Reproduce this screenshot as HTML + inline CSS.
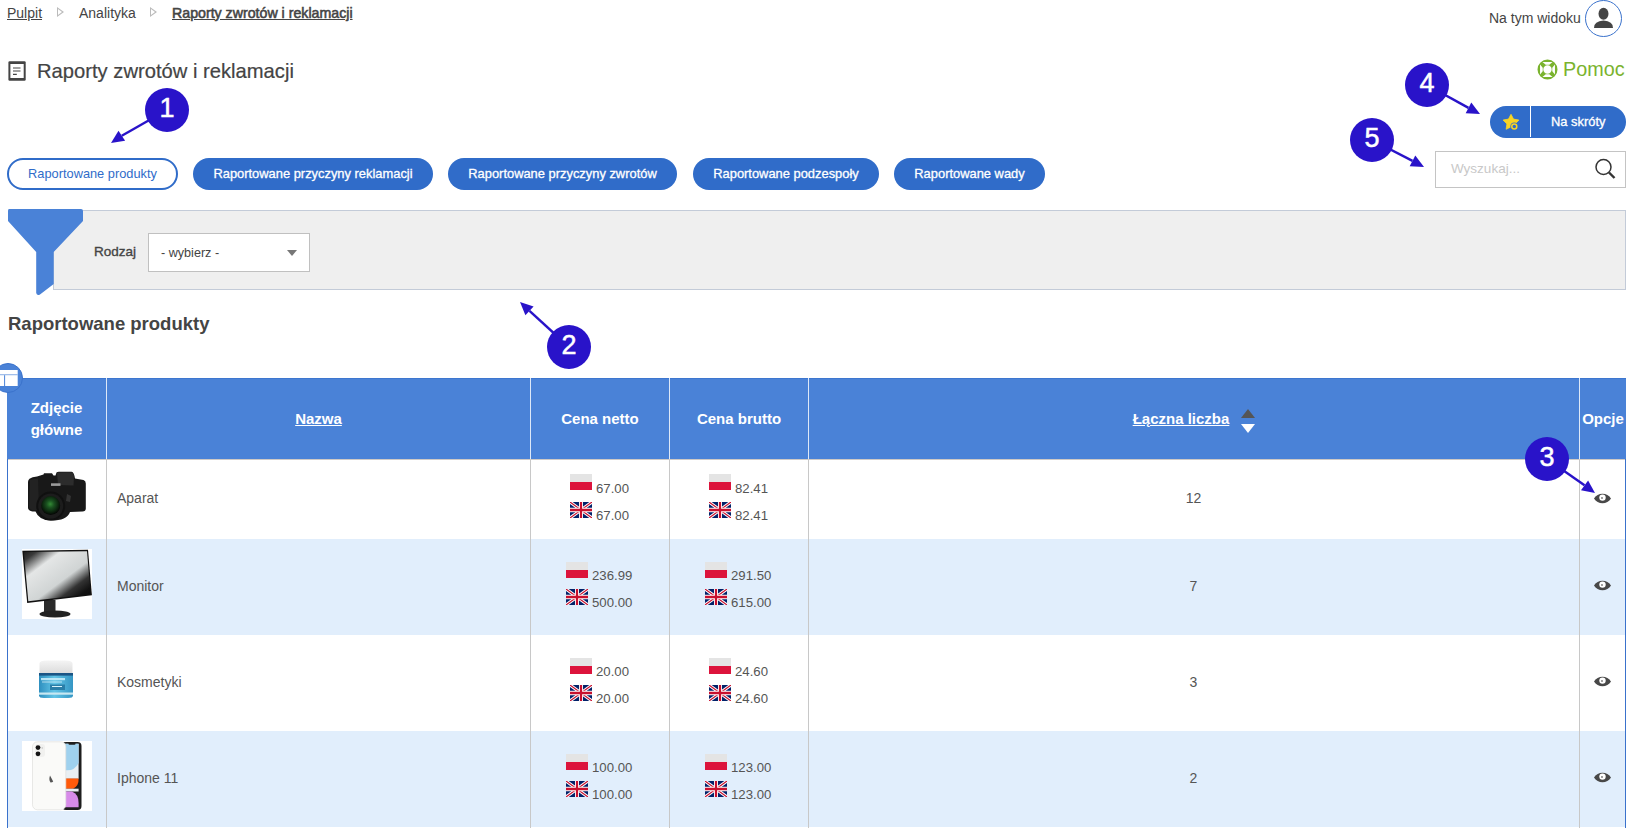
<!DOCTYPE html>
<html><head><meta charset="utf-8">
<style>
*{margin:0;padding:0;box-sizing:border-box}
html,body{width:1629px;height:828px;overflow:hidden;background:#fff}
body{font-family:"Liberation Sans",sans-serif;color:#444;position:relative}
.a{position:absolute;white-space:nowrap}
.bc{font-size:14px;line-height:16px;top:5px;color:#444}
.bc u{text-decoration:underline;text-underline-offset:1px}
.tri{position:absolute;width:0;height:0;border-top:5px solid transparent;border-bottom:5px solid transparent;border-left:7px solid #bbb}
.tri:after{content:"";position:absolute;left:-6px;top:-3px;border-top:3px solid transparent;border-bottom:3px solid transparent;border-left:4px solid #fff}
.tab{position:absolute;top:158px;height:32px;border-radius:16px;background:#306cc9;color:#fff;font-size:12.9px;line-height:32px;text-align:center;-webkit-text-stroke:0.3px #fff}
.tab.out{background:#fff;border:2px solid #306cc9;color:#306cc9;font-weight:normal;line-height:28px;font-size:12.8px;-webkit-text-stroke:0}
.ann{position:absolute;width:44px;height:44px;border-radius:50%;background:#2913c9;color:#fff;font-size:26px;line-height:44px;text-align:center}
.th{position:absolute;top:378px;height:81px;color:#fff;font-weight:bold;font-size:15px;display:flex;align-items:center;justify-content:center;text-align:center;line-height:22px}
.vl{position:absolute;width:1px}
.row{position:absolute;left:7px;width:1619px}
.cell{position:absolute;font-size:14px;color:#555}
.price{position:absolute;font-size:13.2px;color:#555;line-height:16px}
.pl{display:inline-block;width:22px;height:16px;background:linear-gradient(#e4e4e4 50%,#dc143c 50%);vertical-align:-3px;margin-right:4px}
</style></head><body>

<!-- breadcrumb -->
<div class="a bc" style="left:7px"><u>Pulpit</u></div>
<div class="tri" style="left:57px;top:7px"></div>
<div class="a bc" style="left:79px">Analityka</div>
<div class="tri" style="left:150px;top:7px"></div>
<div class="a bc" style="left:172px;font-size:14.2px;-webkit-text-stroke:0.55px #444"><u>Raporty zwrotów i reklamacji</u></div>

<div class="a" style="left:1489px;top:10px;font-size:14px;line-height:16px">Na tym widoku</div>
<div class="a" style="left:1585px;top:0px;width:37px;height:37px;border:1.5px solid #3a72cc;border-radius:50%"></div>

<!-- title -->
<div class="a" style="left:37px;top:60px;font-size:20.2px;line-height:22px;color:#444;-webkit-text-stroke:0.2px #444">Raporty zwrotów i reklamacji</div>
<div class="a" style="left:1563px;top:58px;font-size:19.8px;line-height:22px;color:#7ab32e">Pomoc</div>

<!-- tabs -->
<div class="tab out" style="left:7px;width:171px">Raportowane produkty</div>
<div class="tab" style="left:193px;width:240px">Raportowane przyczyny reklamacji</div>
<div class="tab" style="left:448px;width:229px">Raportowane przyczyny zwrotów</div>
<div class="tab" style="left:693px;width:186px">Raportowane podzespoły</div>
<div class="tab" style="left:894px;width:151px">Raportowane wady</div>

<!-- na skroty -->
<div class="a" style="left:1490px;top:106px;width:136px;height:32px;border-radius:16px;background:#306cc9"></div>
<div class="a" style="left:1530px;top:106px;width:1px;height:31px;background:#fff"></div>
<div class="a" style="left:1551px;top:115px;font-size:12.9px;color:#fff;line-height:14px;-webkit-text-stroke:0.3px #fff">Na skróty</div>

<!-- search -->
<div class="a" style="left:1435px;top:151px;width:191px;height:37px;border:1.5px solid #c4c4c4;background:#fff"></div>
<div class="a" style="left:1451px;top:162px;font-size:13.5px;color:#c8c8c8;line-height:14px">Wyszukaj...</div>

<!-- filter panel -->
<div class="a" style="left:53px;top:210px;width:1573px;height:80px;background:#efefef;border:1px solid #c3cbd8"></div>
<div class="a" style="left:94px;top:245px;font-size:13.5px;color:#444;line-height:14px;-webkit-text-stroke:0.35px #444">Rodzaj</div>
<div class="a" style="left:148px;top:233px;width:162px;height:39px;background:#fff;border:1.5px solid #c0c0c0"></div>
<div class="a" style="left:161px;top:246px;font-size:12.6px;color:#444;line-height:14px">- wybierz -</div>

<!-- heading -->
<div class="a" style="left:8px;top:314px;font-size:18.5px;font-weight:bold;color:#444;line-height:20px">Raportowane produkty</div>

<!-- table header -->
<div class="a" style="left:7px;top:378px;width:1619px;height:81px;background:#4a82d7;border-top:1px solid #3d76cf"></div>


<!-- table header cells -->
<div class="th" style="left:7px;width:99px">Zdjęcie<br>główne</div>
<div class="th" style="left:107px;width:423px"><u>Nazwa</u></div>
<div class="th" style="left:531px;width:138px">Cena netto</div>
<div class="th" style="left:670px;width:138px">Cena brutto</div>
<div class="th" style="left:809px;width:770px"><u>Łączna liczba</u><span style="display:inline-block;width:26px"></span></div>
<div class="th" style="left:1580px;width:46px">Opcje</div>
<div class="a" style="left:106px;top:378px;width:1px;height:81px;background:#dde8f8"></div>
<div class="a" style="left:530px;top:378px;width:1px;height:81px;background:#dde8f8"></div>
<div class="a" style="left:669px;top:378px;width:1px;height:81px;background:#dde8f8"></div>
<div class="a" style="left:808px;top:378px;width:1px;height:81px;background:#dde8f8"></div>
<div class="a" style="left:1579px;top:378px;width:1px;height:81px;background:#dde8f8"></div>
<!-- rows -->
<div class="a" style="left:7px;top:459px;width:1619px;height:1px;background:#cfcac6"></div>
<div class="a" style="left:7px;top:539px;width:1619px;height:96px;background:#e1eefc"></div>
<div class="a" style="left:7px;top:731px;width:1619px;height:96px;background:#e1eefc"></div>
<div class="a" style="left:7px;top:459px;width:1px;height:369px;background:#3a72cc"></div>
<div class="a" style="left:1625px;top:459px;width:1px;height:369px;background:#3a72cc"></div>
<div class="a" style="left:106px;top:460px;width:1px;height:368px;background:#c8c8c8"></div>
<div class="a" style="left:530px;top:460px;width:1px;height:368px;background:#c8c8c8"></div>
<div class="a" style="left:669px;top:460px;width:1px;height:368px;background:#c8c8c8"></div>
<div class="a" style="left:808px;top:460px;width:1px;height:368px;background:#c8c8c8"></div>
<div class="a" style="left:1579px;top:460px;width:1px;height:368px;background:#c8c8c8"></div>
<div class="a cell" style="left:117px;top:488px;line-height:20px">Aparat</div>
<div class="a cell" style="left:1180px;width:27px;text-align:center;top:488px;line-height:20px">12</div>
<div class="a cell" style="left:117px;top:576px;line-height:20px">Monitor</div>
<div class="a cell" style="left:1180px;width:27px;text-align:center;top:576px;line-height:20px">7</div>
<div class="a cell" style="left:117px;top:672px;line-height:20px">Kosmetyki</div>
<div class="a cell" style="left:1180px;width:27px;text-align:center;top:672px;line-height:20px">3</div>
<div class="a cell" style="left:117px;top:768px;line-height:20px">Iphone 11</div>
<div class="a cell" style="left:1180px;width:27px;text-align:center;top:768px;line-height:20px">2</div>
<div class="a pl" style="left:570px;top:474px"></div><div class="a price" style="left:596px;top:481px">67.00</div>
<div class="a" style="left:570px;top:502px;width:22px;height:16px;line-height:0"><svg width="22" height="16" viewBox="0 0 60 40" preserveAspectRatio="none"><rect width="60" height="40" fill="#012169"/><path d="M0,0 L60,40 M60,0 L0,40" stroke="#fff" stroke-width="8"/><path d="M0,0 L60,40 M60,0 L0,40" stroke="#C8102E" stroke-width="3"/><path d="M30,0 V40 M0,20 H60" stroke="#fff" stroke-width="11"/><path d="M30,0 V40 M0,20 H60" stroke="#C8102E" stroke-width="6"/></svg></div><div class="a price" style="left:596px;top:508px">67.00</div>
<div class="a pl" style="left:709px;top:474px"></div><div class="a price" style="left:735px;top:481px">82.41</div>
<div class="a" style="left:709px;top:502px;width:22px;height:16px;line-height:0"><svg width="22" height="16" viewBox="0 0 60 40" preserveAspectRatio="none"><rect width="60" height="40" fill="#012169"/><path d="M0,0 L60,40 M60,0 L0,40" stroke="#fff" stroke-width="8"/><path d="M0,0 L60,40 M60,0 L0,40" stroke="#C8102E" stroke-width="3"/><path d="M30,0 V40 M0,20 H60" stroke="#fff" stroke-width="11"/><path d="M30,0 V40 M0,20 H60" stroke="#C8102E" stroke-width="6"/></svg></div><div class="a price" style="left:735px;top:508px">82.41</div>
<svg class="a" style="left:1594px;top:493px" width="17" height="11" viewBox="0 0 17 11"><path d="M0,5.5 C3.5,-0.8 13.5,-0.8 17,5.5 C13.5,11.8 3.5,11.8 0,5.5Z" fill="#484848"/><circle cx="8.5" cy="4.6" r="3.2" fill="#fff"/><circle cx="8" cy="5" r="0.9" fill="#777"/></svg>
<div class="a pl" style="left:566px;top:562px"></div><div class="a price" style="left:592px;top:568px">236.99</div>
<div class="a" style="left:566px;top:589px;width:22px;height:16px;line-height:0"><svg width="22" height="16" viewBox="0 0 60 40" preserveAspectRatio="none"><rect width="60" height="40" fill="#012169"/><path d="M0,0 L60,40 M60,0 L0,40" stroke="#fff" stroke-width="8"/><path d="M0,0 L60,40 M60,0 L0,40" stroke="#C8102E" stroke-width="3"/><path d="M30,0 V40 M0,20 H60" stroke="#fff" stroke-width="11"/><path d="M30,0 V40 M0,20 H60" stroke="#C8102E" stroke-width="6"/></svg></div><div class="a price" style="left:592px;top:595px">500.00</div>
<div class="a pl" style="left:705px;top:562px"></div><div class="a price" style="left:731px;top:568px">291.50</div>
<div class="a" style="left:705px;top:589px;width:22px;height:16px;line-height:0"><svg width="22" height="16" viewBox="0 0 60 40" preserveAspectRatio="none"><rect width="60" height="40" fill="#012169"/><path d="M0,0 L60,40 M60,0 L0,40" stroke="#fff" stroke-width="8"/><path d="M0,0 L60,40 M60,0 L0,40" stroke="#C8102E" stroke-width="3"/><path d="M30,0 V40 M0,20 H60" stroke="#fff" stroke-width="11"/><path d="M30,0 V40 M0,20 H60" stroke="#C8102E" stroke-width="6"/></svg></div><div class="a price" style="left:731px;top:595px">615.00</div>
<svg class="a" style="left:1594px;top:580px" width="17" height="11" viewBox="0 0 17 11"><path d="M0,5.5 C3.5,-0.8 13.5,-0.8 17,5.5 C13.5,11.8 3.5,11.8 0,5.5Z" fill="#484848"/><circle cx="8.5" cy="4.6" r="3.2" fill="#fff"/><circle cx="8" cy="5" r="0.9" fill="#777"/></svg>
<div class="a pl" style="left:570px;top:658px"></div><div class="a price" style="left:596px;top:664px">20.00</div>
<div class="a" style="left:570px;top:685px;width:22px;height:16px;line-height:0"><svg width="22" height="16" viewBox="0 0 60 40" preserveAspectRatio="none"><rect width="60" height="40" fill="#012169"/><path d="M0,0 L60,40 M60,0 L0,40" stroke="#fff" stroke-width="8"/><path d="M0,0 L60,40 M60,0 L0,40" stroke="#C8102E" stroke-width="3"/><path d="M30,0 V40 M0,20 H60" stroke="#fff" stroke-width="11"/><path d="M30,0 V40 M0,20 H60" stroke="#C8102E" stroke-width="6"/></svg></div><div class="a price" style="left:596px;top:691px">20.00</div>
<div class="a pl" style="left:709px;top:658px"></div><div class="a price" style="left:735px;top:664px">24.60</div>
<div class="a" style="left:709px;top:685px;width:22px;height:16px;line-height:0"><svg width="22" height="16" viewBox="0 0 60 40" preserveAspectRatio="none"><rect width="60" height="40" fill="#012169"/><path d="M0,0 L60,40 M60,0 L0,40" stroke="#fff" stroke-width="8"/><path d="M0,0 L60,40 M60,0 L0,40" stroke="#C8102E" stroke-width="3"/><path d="M30,0 V40 M0,20 H60" stroke="#fff" stroke-width="11"/><path d="M30,0 V40 M0,20 H60" stroke="#C8102E" stroke-width="6"/></svg></div><div class="a price" style="left:735px;top:691px">24.60</div>
<svg class="a" style="left:1594px;top:676px" width="17" height="11" viewBox="0 0 17 11"><path d="M0,5.5 C3.5,-0.8 13.5,-0.8 17,5.5 C13.5,11.8 3.5,11.8 0,5.5Z" fill="#484848"/><circle cx="8.5" cy="4.6" r="3.2" fill="#fff"/><circle cx="8" cy="5" r="0.9" fill="#777"/></svg>
<div class="a pl" style="left:566px;top:754px"></div><div class="a price" style="left:592px;top:760px">100.00</div>
<div class="a" style="left:566px;top:781px;width:22px;height:16px;line-height:0"><svg width="22" height="16" viewBox="0 0 60 40" preserveAspectRatio="none"><rect width="60" height="40" fill="#012169"/><path d="M0,0 L60,40 M60,0 L0,40" stroke="#fff" stroke-width="8"/><path d="M0,0 L60,40 M60,0 L0,40" stroke="#C8102E" stroke-width="3"/><path d="M30,0 V40 M0,20 H60" stroke="#fff" stroke-width="11"/><path d="M30,0 V40 M0,20 H60" stroke="#C8102E" stroke-width="6"/></svg></div><div class="a price" style="left:592px;top:787px">100.00</div>
<div class="a pl" style="left:705px;top:754px"></div><div class="a price" style="left:731px;top:760px">123.00</div>
<div class="a" style="left:705px;top:781px;width:22px;height:16px;line-height:0"><svg width="22" height="16" viewBox="0 0 60 40" preserveAspectRatio="none"><rect width="60" height="40" fill="#012169"/><path d="M0,0 L60,40 M60,0 L0,40" stroke="#fff" stroke-width="8"/><path d="M0,0 L60,40 M60,0 L0,40" stroke="#C8102E" stroke-width="3"/><path d="M30,0 V40 M0,20 H60" stroke="#fff" stroke-width="11"/><path d="M30,0 V40 M0,20 H60" stroke="#C8102E" stroke-width="6"/></svg></div><div class="a price" style="left:731px;top:787px">123.00</div>
<svg class="a" style="left:1594px;top:772px" width="17" height="11" viewBox="0 0 17 11"><path d="M0,5.5 C3.5,-0.8 13.5,-0.8 17,5.5 C13.5,11.8 3.5,11.8 0,5.5Z" fill="#484848"/><circle cx="8.5" cy="4.6" r="3.2" fill="#fff"/><circle cx="8" cy="5" r="0.9" fill="#777"/></svg>

<!-- title icon -->
<svg class="a" style="left:8px;top:61px" width="18" height="20" viewBox="0 0 18 20"><rect x="0.4" y="0.2" width="17.3" height="19.6" rx="1.2" fill="#444"/><rect x="2.4" y="3" width="13.3" height="14" fill="#fff"/><path d="M5,7H12.5M5,10H12.5M5,13.3H8.8" stroke="#444" stroke-width="1.2"/></svg>
<!-- avatar person -->
<svg class="a" style="left:1593px;top:7px" width="21" height="22" viewBox="0 0 21 22"><ellipse cx="10.5" cy="6.8" rx="5" ry="6" fill="#444"/><path d="M1,21 Q1,14 10.5,13.5 Q20,14 20,21Z" fill="#444"/></svg>
<!-- lifebuoy -->
<svg class="a" style="left:1537px;top:59px" width="21" height="21" viewBox="0 0 21 21"><circle cx="10.5" cy="10.5" r="7.1" fill="none" stroke="#7ab32e" stroke-width="5.8"/><path d="M17.96,5.47 L17.96,15.53 L15.28,12.28 L15.28,8.72Z M15.53,17.96 L5.47,17.96 L8.72,15.28 L12.28,15.28Z M3.04,15.53 L3.04,5.47 L5.72,8.72 L5.72,12.28Z M5.47,3.04 L15.53,3.04 L12.28,5.72 L8.72,5.72Z" fill="#fff"/></svg>
<!-- star -->
<svg class="a" style="left:1502px;top:114px" width="18" height="17" viewBox="0 0 18 17"><path d="M9.00,0.30 L11.53,5.12 L16.89,6.04 L13.09,9.93 L13.88,15.31 L9.00,12.90 L4.12,15.31 L4.91,9.93 L1.11,6.04 L6.47,5.12Z" fill="#f9d423" stroke="#f9d423" stroke-width="0.8" stroke-linejoin="round"/><circle cx="12.3" cy="12.4" r="3.9" fill="#306cc9"/><circle cx="12.3" cy="12.4" r="2.5" fill="none" stroke="#f9d423" stroke-width="1.5"/></svg>
<!-- search icon -->
<svg class="a" style="left:1594px;top:158px" width="22" height="22" viewBox="0 0 22 22"><circle cx="9.5" cy="9" r="7.5" fill="none" stroke="#333" stroke-width="1.5"/><path d="M15,14.5L20.5,20" stroke="#333" stroke-width="2.4"/></svg>
<!-- select arrow -->
<div class="a" style="left:287px;top:250px;width:0;height:0;border-left:5px solid transparent;border-right:5px solid transparent;border-top:6px solid #777"></div>
<!-- funnel -->
<svg class="a" style="left:7px;top:208px" width="77" height="88" viewBox="0 0 77 88"><path d="M2,1 H74 Q76,1 76,3 V13 L46.7,44 V76 L33,86.5 Q30,88 29.2,85 V44 L1,13 V3 Q1,1 2,1Z" fill="#4a82d7"/></svg>
<!-- sort icons -->
<div class="a" style="left:1241px;top:409px;width:0;height:0;border-left:7px solid transparent;border-right:7px solid transparent;border-bottom:9px solid #555"></div>
<div class="a" style="left:1241px;top:424px;width:0;height:0;border-left:7px solid transparent;border-right:7px solid transparent;border-top:9px solid #fff"></div>
<!-- table settings circle -->
<div class="a" style="left:-7px;top:363px;width:30px;height:30px;border-radius:50%;background:#4a82d7;border:1px solid #3a72cc"></div>
<svg class="a" style="left:0px;top:370px" width="18" height="17" viewBox="0 0 18 17"><rect x="0" y="0" width="17.7" height="16" fill="#fff"/><rect x="0" y="4.3" width="17.7" height="0.9" fill="#7aa3e2"/><rect x="4.1" y="5.2" width="1" height="10.8" fill="#4a82d7"/></svg>
<svg class="a" style="left:0;top:0" width="1629" height="828" viewBox="0 0 1629 828"><line x1="167" y1="110" x2="121.8" y2="135.8" stroke="#2913c9" stroke-width="2.4"/><path d="M111,143 L118.5,130.8 L125.1,140.8Z" fill="#2913c9"/><circle cx="167" cy="110" r="22" fill="#2913c9"/><line x1="569" y1="347" x2="529.5" y2="310.9" stroke="#2913c9" stroke-width="2.4"/><path d="M520,302 L533.6,306.5 L525.4,315.3Z" fill="#2913c9"/><circle cx="569" cy="347" r="22" fill="#2913c9"/><line x1="1547" y1="459" x2="1584.5" y2="485.3" stroke="#2913c9" stroke-width="2.4"/><path d="M1595,493 L1581.0,490.2 L1588.1,480.5Z" fill="#2913c9"/><circle cx="1547" cy="459" r="22" fill="#2913c9"/><line x1="1427" y1="85" x2="1468.5" y2="107.9" stroke="#2913c9" stroke-width="2.4"/><path d="M1480,114 L1465.7,113.2 L1471.3,102.6Z" fill="#2913c9"/><circle cx="1427" cy="85" r="22" fill="#2913c9"/><line x1="1372" y1="140" x2="1412.5" y2="160.9" stroke="#2913c9" stroke-width="2.4"/><path d="M1424,167 L1409.7,166.2 L1415.3,155.6Z" fill="#2913c9"/><circle cx="1372" cy="140" r="22" fill="#2913c9"/></svg>
<div class="a" style="left:145px;top:86px;width:44px;height:44px;text-align:center;line-height:44px;font-size:27px;color:#fff;-webkit-text-stroke:0.5px #fff">1</div>
<div class="a" style="left:547px;top:323px;width:44px;height:44px;text-align:center;line-height:44px;font-size:27px;color:#fff;-webkit-text-stroke:0.5px #fff">2</div>
<div class="a" style="left:1525px;top:435px;width:44px;height:44px;text-align:center;line-height:44px;font-size:27px;color:#fff;-webkit-text-stroke:0.5px #fff">3</div>
<div class="a" style="left:1405px;top:61px;width:44px;height:44px;text-align:center;line-height:44px;font-size:27px;color:#fff;-webkit-text-stroke:0.5px #fff">4</div>
<div class="a" style="left:1350px;top:116px;width:44px;height:44px;text-align:center;line-height:44px;font-size:27px;color:#fff;-webkit-text-stroke:0.5px #fff">5</div>

<!-- camera -->
<svg class="a" style="left:22px;top:468px" width="70" height="56" viewBox="0 0 70 56">
<defs><radialGradient id="lg" cx="0.48" cy="0.42" r="0.55"><stop offset="0" stop-color="#338a35"/><stop offset="0.35" stop-color="#1a5220"/><stop offset="0.8" stop-color="#0a200c"/><stop offset="1" stop-color="#050805"/></radialGradient></defs>
<path d="M7.5,10.8 Q10,8.8 15,8.4 L21.5,6.5 L22,5.2 L30,5.2 L31.5,7.5 L33.5,7.5 L34.5,4.6 Q35,3.8 37,3.8 L49.5,3.8 Q51.5,4 52.5,8 L53,10.5 L61.5,12 Q63.8,12.8 63.8,15.5 L63.8,40.5 Q63.8,43.4 60.5,43.4 L48,44 Q45,52.6 29,52.6 Q17,52.6 13.5,43.6 L10.5,43.4 Q6,43 6,39.5 L6,14 Q6,12 7.5,10.8Z" fill="#181818"/>
<path d="M35,4.5 L49.5,4.2 Q51.5,4.5 52,8.5 L51.5,17.5 L36,17Z" fill="#2c2c2c"/>
<path d="M8,12 Q12,10.5 16,10.5 L17,42 L10,42 Q7,41 7,38Z" fill="#222"/>
<rect x="29" y="15.3" width="9.5" height="2.6" fill="#9a9a9a"/>
<circle cx="28.7" cy="38.1" r="14.5" fill="#101010"/>
<circle cx="28.7" cy="38.1" r="12.5" fill="#1c1c1c"/>
<circle cx="28.7" cy="37.6" r="9.5" fill="url(#lg)"/>
<path d="M45,26 L49,28 L48,34 L44,33Z" fill="#333"/>
</svg>
<!-- monitor -->
<svg class="a" style="left:22px;top:549px" width="70" height="70" viewBox="0 0 70 70">
<defs><linearGradient id="mg" x1="0" y1="0" x2="1" y2="1"><stop offset="0" stop-color="#1a1a1a"/><stop offset="0.1" stop-color="#3a3a3a"/><stop offset="0.28" stop-color="#e4e6e6"/><stop offset="0.58" stop-color="#d0d4d4"/><stop offset="0.74" stop-color="#333"/><stop offset="0.86" stop-color="#121212"/><stop offset="1" stop-color="#0a0a0a"/></linearGradient></defs>
<rect width="70" height="70" fill="#fff"/>
<rect x="22" y="51" width="11.5" height="13" fill="#2a2a2a"/>
<ellipse cx="33" cy="65" rx="15.5" ry="3.6" fill="#222"/>
<path d="M0.3,1.8 L66,0.8 L69.9,46.2 L5.2,54Z" fill="#111"/>
<path d="M1.8,3 L65,2.2 L68.6,45 L6.3,52.3Z" fill="url(#mg)"/>
</svg>
<!-- cosmetics -->
<svg class="a" style="left:38px;top:660px" width="36" height="40" viewBox="0 0 36 40">
<defs><linearGradient id="jg" x1="0" y1="0" x2="1" y2="0"><stop offset="0" stop-color="#2e8fbf"/><stop offset="0.45" stop-color="#62c4e6"/><stop offset="1" stop-color="#3596c4"/></linearGradient>
<linearGradient id="lid" x1="0" y1="0" x2="0" y2="1"><stop offset="0" stop-color="#f4f4f4"/><stop offset="1" stop-color="#dcdcdc"/></linearGradient></defs>
<path d="M1.5,3.5 Q1.5,0.5 9,0.5 L27,0.5 Q34.5,0.5 34.5,3.5 L34.5,13 L1.5,13Z" fill="url(#lid)"/>
<path d="M1,13 L35,13 L35,35.5 Q35,38 30,38 L6,38 Q1,38 1,35.5Z" fill="url(#jg)"/>
<rect x="1" y="13" width="34" height="2.6" fill="#1b5585"/>
<rect x="3" y="18" width="24" height="2.2" fill="#c5ecfa" opacity="0.9"/>
<rect x="4" y="21.5" width="20" height="1" fill="#e6f7fd" opacity="0.7"/>
<rect x="12" y="24.5" width="15" height="5.5" fill="#2a7ea8"/>
<rect x="14" y="26" width="10" height="1" fill="#d6f2fb"/>
<rect x="1" y="32.5" width="34" height="2.2" fill="#c8e8f2"/>
</svg>
<!-- iphone -->
<svg class="a" style="left:22px;top:741px" width="70" height="70" viewBox="0 0 70 70">
<rect width="70" height="70" fill="#fff"/>
<rect x="40" y="1" width="19.5" height="68" rx="4" fill="#1e1e1e"/>
<rect x="42" y="2.8" width="14.6" height="35" fill="#e9eff3"/>
<path d="M42,2.8 L56.6,2.8 L56.6,22 Q52,31 42,29Z" fill="#9fd1ee"/>
<path d="M42,37.5 L56.6,37.5 Q57,45 51,47.7 L42,47.7Z" fill="#ff5a0a"/>
<rect x="42" y="47.7" width="14.6" height="2.8" fill="#e6ecf0"/>
<path d="M42,50.5 L50,50.5 Q56.6,53 56.6,62 L56.6,66.3 L42,66.3Z" fill="#d78be9"/>
<rect x="46.5" y="1" width="7" height="2.8" rx="1" fill="#1e1e1e"/>
<rect x="10.5" y="0.8" width="33.3" height="68" rx="5" fill="#fafaf8" stroke="#e0e0dc" stroke-width="0.7"/>
<rect x="13" y="3" width="10" height="13" rx="3" fill="#f1f1ef"/>
<circle cx="16" cy="6.6" r="2.4" fill="#151515"/>
<circle cx="16" cy="12.8" r="2.4" fill="#151515"/>
<circle cx="20.2" cy="7" r="0.7" fill="#bbb"/>
<path d="M28,34.5 Q26.5,38.5 28.5,41.5 Q30.5,41.5 31.2,40.5Z" fill="#555"/>
</svg>
</body></html>
